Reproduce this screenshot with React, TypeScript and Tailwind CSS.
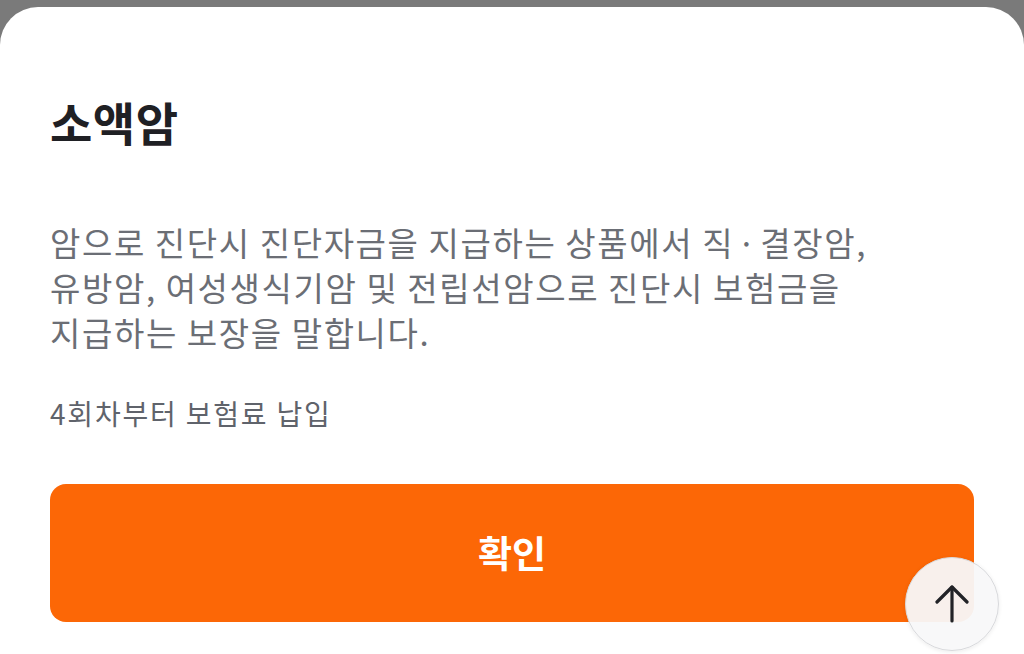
export default function App() {
  return (
    <div
      className="relative h-[654px] w-[1024px] overflow-hidden bg-[#7a7a7a] pt-[7px]"
      style={{ fontFamily: '"Noto Sans CJK KR", "Noto Sans", sans-serif' }}
    >
      <div className="h-full rounded-t-[38px] bg-white px-[50px] pt-[86px]">
        <h1 className="text-[46px] font-bold leading-[56px] tracking-[0.5px] text-[#1f2024]">소액암</h1>

        <p className="mt-[71px] text-[33px] leading-[45px] tracking-[1.6px] text-[#6b6e75]">
          암으로 진단시 진단자금을 지급하는 상품에서 직<span className="mx-[3px]">·</span>결장암,
          <br />
          유방암, 여성생식기암 및 전립선암으로 진단시 보험금을
          <br />
          지급하는 보장을 말합니다.
        </p>

        <p className="mt-[40px] text-[28px] leading-[36px] tracking-[1.8px] text-[#5f636b]">4회차부터 보험료 납입</p>

        <button className="mt-[53px] flex h-[138px] w-full items-center justify-center rounded-[16px] bg-[#fc6706] text-[37px] font-semibold text-white">
          확인
        </button>
      </div>

      {/* scroll-to-top */}
      <div className="absolute left-[905px] top-[557px] flex h-[94px] w-[94px] items-center justify-center rounded-full border border-[#d8d9dc] bg-[#f8f8f9]/95 shadow-[0_1px_4px_rgba(0,0,0,0.08)]">
        <svg width="36" height="38" viewBox="0 0 36 38" fill="none" stroke="#222327" strokeWidth="3.2" strokeLinecap="round" strokeLinejoin="round">
          <path d="M18 2v34" />
          <path d="M3 17 18 2l15 15" />
        </svg>
      </div>
    </div>
  );
}
